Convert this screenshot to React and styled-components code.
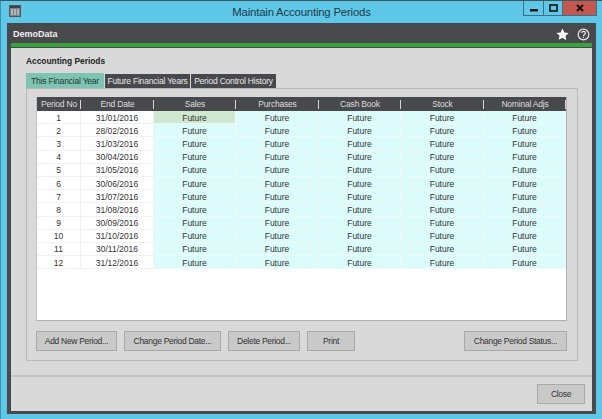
import React from 'react';
import styled, { createGlobalStyle } from 'styled-components';

const Global = createGlobalStyle`
  html, body { margin: 0; padding: 0; background: #5fc8e8; }
  body { font-family: "Liberation Sans", Arial, sans-serif; }
`;

const Win = styled.div`
  width: 602px;
  height: 419px;
  box-sizing: border-box;
  border-top: 1px solid #3f5560;
  border-left: 1px solid #3f8fb0;
  background: #5fc8e8;
  padding: 0 6px 5px 6px;
  display: flex;
  flex-direction: column;
  overflow: hidden;
`;

const TitleBar = styled.div`
  position: relative;
  height: 22px;
  flex: none;
  display: flex;
  align-items: center;
  justify-content: center;
  padding-bottom: 1px;
  box-sizing: border-box;
  font-size: 11.4px;
  letter-spacing: -0.2px;
  color: #1c3a48;
`;

const AppIcon = styled.svg`
  position: absolute;
  left: 2px;
  top: 4px;
`;

const Controls = styled.div`
  position: absolute;
  right: -1px;
  top: -1px;
  display: flex;
  height: 16px;
  border: 1px solid #3f6f85;
  border-top: 0;
  box-sizing: border-box;
`;

const Ctrl = styled.div`
  width: ${p => p.$w}px;
  display: flex;
  align-items: center;
  justify-content: center;
  background: ${p => p.$bg || 'transparent'};
  border-left: ${p => p.$first ? '0' : '1px solid #3f6f85'};
`;

const Frame = styled.div`
  flex: 1;
  display: flex;
  flex-direction: column;
  background: #48494c;
  padding: 0 4px 3px;
  min-height: 0;
`;

const Head = styled.div`
  height: 20px;
  flex: none;
  display: flex;
  align-items: center;
  justify-content: space-between;
  padding: 2px 2px 0 2px;
  box-sizing: border-box;
  color: #f0f0f0;
  font-size: 9px;
  font-weight: bold;
`;

const HeadIcons = styled.div`
  display: flex;
  align-items: center;
  gap: 8px;
`;

const Green = styled.div`
  height: 4px;
  flex: none;
  background: #36a63c;
  margin-bottom: 1px;
`;

const Content = styled.div`
  flex: 1;
  background: #d9d9d9;
  display: flex;
  flex-direction: column;
  min-height: 0;
`;

const Main = styled.div`
  height: 329px;
  flex: none;
  box-sizing: border-box;
  padding: 8px 14px 0 15px;
  border-bottom: 2px solid #c4c4c4;
`;

const Heading = styled.div`
  font-size: 8.4px;
  font-weight: bold;
  color: #222;
  height: 17px;
`;

const Tabs = styled.div`
  display: flex;
  align-items: flex-end;
  height: 15px;
  gap: 1px;
`;

const Tab = styled.div`
  height: ${p => p.$active ? 15 : 14}px;
  width: ${p => p.$w}px;
  box-sizing: border-box;
  display: flex;
  align-items: center;
  justify-content: center;
  font-size: 8.5px;
  letter-spacing: -0.2px;
  white-space: nowrap;
  color: ${p => p.$active ? '#1d3a33' : '#e8e8e8'};
  background: ${p => p.$active ? '#7fc4b2' : '#48494c'};
`;

const Group = styled.div`
  height: 273px;
  box-sizing: border-box;
  border: 1px solid #b8b8b8;
  padding: 8px 10px 0 9px;
`;

const GridBox = styled.div`
  height: 224px;
  box-sizing: border-box;
  background: #fff;
  border-left: 1px solid #c4c4c4;
  border-right: 1px solid #b0b0b0;
  border-bottom: 1px solid #b0b0b0;
`;

const columns = '44px 73px 82px 83px 82px 83px 82px';

const HeaderRow = styled.div`
  display: grid;
  grid-template-columns: ${columns};
  height: 14px;
  background: #48494c;
`;

const HeaderCell = styled.div`
  position: relative;
  display: flex;
  align-items: center;
  justify-content: center;
  font-size: 8.5px;
  letter-spacing: -0.2px;
  color: #dcdcdc;
  &::after {
    content: '';
    position: absolute;
    right: 0;
    top: 3px;
    bottom: 2px;
    width: 1px;
    background: #d8d8d8;
  }
`;

const Row = styled.div`
  display: grid;
  grid-template-columns: ${columns};
  height: 13.2px;
`;

const Cell = styled.div`
  display: flex;
  align-items: center;
  justify-content: center;
  padding-top: 1px;
  font-size: 8.5px;
  color: #333;
  box-sizing: border-box;
  background: ${p => p.$bg || '#fff'};
  border-right: 1px solid ${p => p.$bg ? '#eefafa' : '#f0f0f0'};
  border-bottom: 1px solid ${p => p.$bg ? '#eefafa' : '#f0f0f0'};
`;

const Actions = styled.div`
  display: flex;
  justify-content: space-between;
  margin-top: 10px;
`;

const ActionGroup = styled.div`
  display: flex;
  gap: ${p => p.$gap || 7}px;
`;

const Btn = styled.div`
  width: ${p => p.$w}px;
  height: 20px;
  box-sizing: border-box;
  display: flex;
  align-items: center;
  justify-content: center;
  background: #c9c9c9;
  border: 1px solid #a8a8a8;
  font-size: 8.5px;
  letter-spacing: -0.3px;
  color: #333;
  white-space: nowrap;
`;

const Foot = styled.div`
  flex: 1;
  display: flex;
  justify-content: flex-end;
  padding: 7px 7px 0 0;
`;

const rows = [
  '31/01/2016', '28/02/2016', '31/03/2016', '30/04/2016', '31/05/2016', '30/06/2016',
  '31/07/2016', '31/08/2016', '30/09/2016', '31/10/2016', '30/11/2016', '31/12/2016',
];

const headers = ['Period No', 'End Date', 'Sales', 'Purchases', 'Cash Book', 'Stock', 'Nominal Adjs'];

export default function App() {
  return (
    <>
      <Global />
      <Win>
        <TitleBar>
          <AppIcon width="12" height="12" viewBox="0 0 12 12">
            <rect x="0.5" y="0.5" width="11" height="11" fill="#7d8487" stroke="#555" />
            <rect x="1" y="1" width="10" height="2" fill="#3e4245" />
            <path d="M2 5h2M5 5h2M8 5h2M2 7h2M5 7h2M8 7h2M2 9h2M5 9h2M8 9h2" stroke="#e4e4e4" />
          </AppIcon>
          Maintain Accounting Periods
          <Controls>
            <Ctrl $w={19} $first>
              <svg width="8" height="8" viewBox="0 0 8 8"><rect x="0" y="5" width="8" height="2.5" fill="#111" /></svg>
            </Ctrl>
            <Ctrl $w={18}>
              <svg width="9" height="8" viewBox="0 0 9 8"><rect x="1" y="1" width="7" height="6" fill="none" stroke="#111" strokeWidth="1.6" /></svg>
            </Ctrl>
            <Ctrl $w={33} $bg="#c4584e">
              <svg width="8" height="8" viewBox="0 0 8 8"><path d="M1 1l6 6M7 1l-6 6" stroke="#111" strokeWidth="1.8" /></svg>
            </Ctrl>
          </Controls>
        </TitleBar>
        <Frame>
          <Head>
            DemoData
            <HeadIcons>
              <svg width="13" height="13" viewBox="0 0 24 24"><path d="M12 1l3.4 7.3 7.9 1-5.8 5.4 1.5 7.9L12 17.8l-7 3.8 1.5-7.9L.7 9.3l7.9-1z" fill="#fff" /></svg>
              <svg width="13" height="13" viewBox="0 0 13 13">
                <circle cx="6.5" cy="6.5" r="5.3" fill="none" stroke="#e8e8e8" strokeWidth="1.2" />
                <path d="M4.7 5.1c0-2.3 3.7-2.3 3.7 0 0 1.4-1.9 1.4-1.9 2.8" fill="none" stroke="#e8e8e8" strokeWidth="1.2" />
                <rect x="5.9" y="8.7" width="1.2" height="1.3" fill="#e8e8e8" />
              </svg>
            </HeadIcons>
          </Head>
          <Green />
          <Content>
            <Main>
              <Heading>Accounting Periods</Heading>
              <Tabs>
                <Tab $active $w={78}>This Financial Year</Tab>
                <Tab $w={85}>Future Financial Years</Tab>
                <Tab $w={85}>Period Control History</Tab>
              </Tabs>
              <Group>
                <GridBox>
                  <HeaderRow>
                    {headers.map(h => <HeaderCell key={h}>{h}</HeaderCell>)}
                  </HeaderRow>
                  {rows.map((d, i) => (
                    <Row key={d}>
                      <Cell>{i + 1}</Cell>
                      <Cell>{d}</Cell>
                      {[0, 1, 2, 3, 4].map(c => (
                        <Cell key={c} $bg={i === 0 && c === 0 ? '#cfe8cf' : '#dcfcfc'}>Future</Cell>
                      ))}
                    </Row>
                  ))}
                </GridBox>
                <Actions>
                  <ActionGroup>
                    <Btn $w={81}>Add New Period...</Btn>
                    <Btn $w={97}>Change Period Date...</Btn>
                    <Btn $w={72}>Delete Period...</Btn>
                    <Btn $w={48}>Print</Btn>
                  </ActionGroup>
                  <Btn $w={103}>Change Period Status...</Btn>
                </Actions>
              </Group>
            </Main>
            <Foot>
              <Btn $w={48}>Close</Btn>
            </Foot>
          </Content>
        </Frame>
      </Win>
    </>
  );
}
